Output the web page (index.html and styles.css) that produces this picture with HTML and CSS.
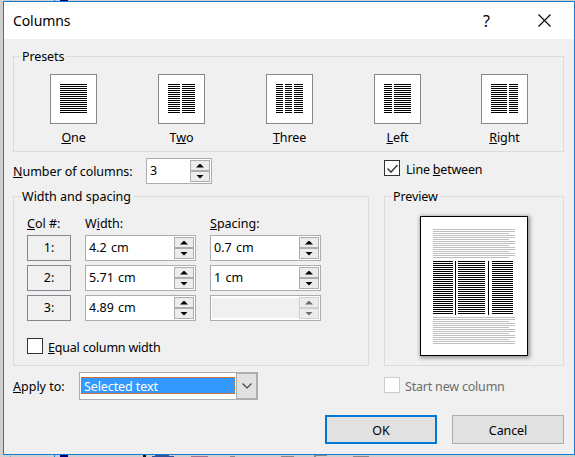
FILE: index.html
```
<!DOCTYPE html>
<html lang="en">
<head>
<meta charset="utf-8">
<title>Columns</title>
<link rel="stylesheet" href="styles.css">
</head>
<body>
<svg class="desktop" width="575" height="457" shape-rendering="crispEdges">
  <path fill="#1979ca" d="M54 0h1v1h-1zM54 455h1v2h-1z"/>
  <path fill="#000080" d="M60 0h8v2h-8zM60 455h8v2h-8z"/>
  <path fill="#aaa" d="M10 0h1v1h-1zM10 455h1v2h-1z"/>
  <path fill="#111" d="M143 455h3v2h-3z"/>
  <path fill="#31549c" d="M155 455h14v1h-14zM152 456h22v1h-22z"/>
  <path fill="#9b7590" d="M191 456h17v1h-17z"/>
  <path fill="#888" d="M230 456h5v1h-5zM281 456h13v1h-13zM314 455h13v1h-13zM314 456h2v1h-2zM353 456h16v1h-16z"/>
</svg>
<div class="dialog">
  <header class="titlebar">
    <h1>Columns</h1>
    <span class="help">?</span>
    <svg class="close" width="13" height="13" viewBox="0 0 13 13"><path d="M.5.5l12 12M12.5.5l-12 12"/></svg>
  </header>
  <section class="group presets">
    <h2 class="legend l-presets">Presets</h2>
    <div class="preset"><div class="thumb"><i class="w27"></i></div><span><u>O</u>ne</span></div>
    <div class="preset"><div class="thumb"><i class="w12"></i><i class="w13"></i></div><span>T<u>w</u>o</span></div>
    <div class="preset"><div class="thumb"><i class="w7"></i><i class="w7"></i><i class="w9"></i></div><span><u>T</u>hree</span></div>
    <div class="preset"><div class="thumb"><i class="w8"></i><i class="w17"></i></div><span><u>L</u>eft</span></div>
    <div class="preset last"><div class="thumb"><i class="w16"></i><i class="w9"></i></div><span><u>R</u>ight</span></div>
  </section>
  <div class="count-row">
    <label class="count-label"><u>N</u>umber of columns:</label>
    <div class="spin small"><span>3</span><div class="arrows"><b class="up"></b><b class="down"></b></div></div>
    <div class="check line-check"><svg class="box" width="16" height="16"><path d="M2.500 7.500l3.500 3.500 6.500-7"/></svg><span>Line <u>b</u>etween</span></div>
  </div>
  <div class="middle">
    <section class="group sizes">
      <h2 class="legend l-sizes">Width and spacing</h2>
      <div class="table">
        <span class="th"><u>C</u>ol #:</span><span class="th">W<u>i</u>dth:</span><span class="th"><u>S</u>pacing:</span>
        <div class="num">1:</div>
        <div class="spin"><span>4.2 cm</span><div class="arrows"><b class="up"></b><b class="down"></b></div></div>
        <div class="spin"><span>0.7 cm</span><div class="arrows"><b class="up"></b><b class="down"></b></div></div>
        <div class="num">2:</div>
        <div class="spin"><span>5.71 cm</span><div class="arrows"><b class="up"></b><b class="down"></b></div></div>
        <div class="spin"><span>1 cm</span><div class="arrows"><b class="up"></b><b class="down"></b></div></div>
        <div class="num">3:</div>
        <div class="spin"><span>4.89 cm</span><div class="arrows"><b class="up"></b><b class="down"></b></div></div>
        <div class="spin off"><span></span><div class="arrows"><b class="up"></b><b class="down"></b></div></div>
      </div>
      <div class="check equal"><svg class="box" width="16" height="16"></svg><span><u>E</u>qual column width</span></div>
    </section>
    <section class="group preview">
      <h2 class="legend l-preview">Preview</h2>
      <svg class="page" width="108" height="140" shape-rendering="crispEdges">
        <defs>
          <pattern id="grey" width="82" height="6" patternUnits="userSpaceOnUse" x="13" y="13"><path fill="#bfbfbf" d="M0 0h82v1H0zM0 2h82v1H0zM0 4h76v1H0z"/></pattern>
          <pattern id="grey2" width="82" height="6" patternUnits="userSpaceOnUse" x="13" y="101"><path fill="#bfbfbf" d="M0 0h82v1H0zM0 2h82v1H0zM0 4h76v1H0z"/></pattern>
          <pattern id="ink" width="82" height="2" patternUnits="userSpaceOnUse" x="13" y="45"><path d="M0 0h20v1H0zM25 0h27v1H25zM59 0h21v1H59z"/></pattern>
        </defs>
        <path fill="#fff" stroke="#000" d="M.5.5h107v139H.5z"/>
        <path fill="url(#grey)" d="M13 13h82v29H13z"/>
        <path fill="url(#ink)" d="M13 45h82v53H13z"/>
        <path d="M35 45h1v54h-1zM68 45h1v54h-1z"/>
        <path fill="url(#grey2)" d="M13 101h82v27H13z"/>
      </svg>
    </section>
  </div>
  <div class="apply-row">
    <label class="apply-label"><u>A</u>pply to:</label>
    <div class="combo"><span class="selected">Selected text</span><div class="drop"><svg width="12" height="8"><path d="M1.500 1.500L6 6l4.500-4.500"/></svg></div></div>
    <div class="check start"><svg class="box" width="16" height="16"></svg><span>Start new column</span></div>
  </div>
  <footer><button class="ok">OK</button><button>Cancel</button></footer>
</div>
</body>
</html>
```
FILE: styles.css
```
* { box-sizing: border-box; }
body { margin: 0; width: 575px; height: 457px; overflow: hidden; background: #d0d0d0; font: 12.5px/16px "Noto Sans", sans-serif; color: #000; }
.desktop { position: absolute; left: 0; top: 0; }
.dialog { position: relative; width: 572px; height: 454px; margin: 1px 0 0 3px; border: 1px solid #1979ca; background: #f0f0f0; }
h1, h2 { margin: 0; font-weight: 400; }
u { text-decoration: underline; text-decoration-thickness: 1px; text-underline-offset: 1px; text-decoration-skip-ink: none; }
.titlebar { display: flex; height: 37px; padding: 0 23px 0 9px; align-items: center; background: #fff; }
h1 { flex: 1; font-size: 14px; line-height: 20px; letter-spacing: -0.1px; }
.help { width: 9px; margin-right: 46px; font-size: 16px; }
.close { stroke: #000; stroke-width: 1.1; fill: none; }
.group { border: 1px solid #dcdcdc; }
.legend { position: absolute; top: -8px; left: 7px; padding: 0 2px 0 1px; background: #f0f0f0; font-size: 12.5px; line-height: 16px; white-space: nowrap; }
.l-presets, .l-preview { letter-spacing: -0.1px; }
.presets { position: relative; display: flex; width: 551px; height: 96px; margin: 17px 0 0 9px; padding: 17px 0 0 36px; }
.preset { display: flex; flex-direction: column; align-items: center; width: 47px; margin-right: 61px; }
.preset:nth-of-type(4) { margin-right: 60px; }
.preset.last { margin-right: 0; }
.preset span { margin-top: 6px; letter-spacing: -0.1px; }
.thumb { display: flex; gap: 2px; width: 47px; height: 50px; padding: 9px; border: 1px solid #828790; background: #fff; }
.thumb i { height: 29px; background: repeating-linear-gradient(#000 0 1px, #fff 1px 2px); }
.w7 { width: 7px; }
.w8 { width: 8px; }
.w9 { width: 9px; }
.w12 { width: 12px; }
.w13 { width: 13px; }
.w16 { width: 16px; }
.w17 { width: 17px; }
.w27 { width: 27px; }
.count-row { display: flex; height: 26px; margin: 6px 0 0 9px; }
.count-label { width: 133px; padding-top: 6px; white-space: nowrap; letter-spacing: -0.05px; }
.spin { display: flex; width: 111px; height: 26px; padding: 1px; border: 1px solid #abadb3; background: #fff; }
.spin.small { width: 66px; }
.spin > span { flex: 1; padding: 3px 0 0 2px; white-space: nowrap; word-spacing: 1px; }
.arrows { width: 20px; height: 22px; border: 1px solid #adadad; }
.arrows b { display: flex; height: 10px; align-items: center; justify-content: center; background: #ececec; }
.arrows .up { border-bottom: 1px solid #adadad; }
.arrows .down { border-top: 1px solid #adadad; }
.arrows b::before { content: ""; width: 8px; height: 4px; background: #000; clip-path: polygon(50% 0, 100% 100%, 0 100%); }
.arrows .down::before { clip-path: polygon(0 0, 100% 0, 50% 100%); }
.off > span { margin: 1px 0 1px 0; background: #f0f0f0; }
.off .arrows, .off .arrows b { border-color: #d0d0d0; }
.off .arrows b::before { background: #6d6d6d; }
.check { display: flex; align-items: flex-start; white-space: nowrap; letter-spacing: -0.2px; }
.box { flex: none; border: 1px solid #333; background: #fff; fill: none; stroke: #444; stroke-width: 1.6; }
.line-check { margin: 2px 0 0 172px; }
.line-check span { margin: 2px 0 0 6px; }
.middle { display: flex; gap: 15px; margin: 12px 0 0 9px; }
.sizes { position: relative; width: 356px; height: 170px; padding: 19px 0 0 13px; }
.table { display: grid; grid-template-columns: 44px 111px 111px; column-gap: 14px; row-gap: 4px; }
.th { height: 15px; white-space: nowrap; }
.num { height: 26px; border: 1px solid #828790; text-align: center; line-height: 24px; }
.equal { margin-top: 17px; }
.equal span { margin: 2px 0 0 5px; }
.preview { position: relative; width: 180px; height: 170px; padding: 19px 0 0 35px; }
.page { display: block; box-shadow: 1px 1px 4px 1px rgba(0,0,0,.4); }
.apply-row { display: flex; height: 28px; margin: 6px 0 0 9px; }
.apply-label { width: 66px; padding-top: 7px; white-space: nowrap; }
.combo { display: flex; width: 179px; height: 28px; border: 1px solid #abadb3; background: #fff; }
.selected { width: 154px; height: 17px; margin: 4px 1px 0; padding-left: 2px; border: 1px dotted #c87137; background: #39f; color: #fff; line-height: 17px; letter-spacing: -0.1px; white-space: nowrap; }
.drop { display: flex; flex: 1; align-items: center; justify-content: center; border: 1px solid #adadad; background: #e1e1e1; }
.drop svg { fill: none; stroke: #444; stroke-width: 1.2; }
.start { margin: 5px 0 0 126px; color: #6d6d6d; }
.start .box { border-color: #ccc; }
.start span { margin: 2px 0 0 5px; }
footer { display: flex; gap: 15px; margin: 15px 0 0 321px; }
button { width: 112px; height: 29px; padding: 2px 0 0; border: 1px solid #adadad; background: #e1e1e1; color: #000; font: 12.5px/16px "Noto Sans", sans-serif; letter-spacing: -0.1px; }
.ok { border: 2px solid #0078d7; }
```
